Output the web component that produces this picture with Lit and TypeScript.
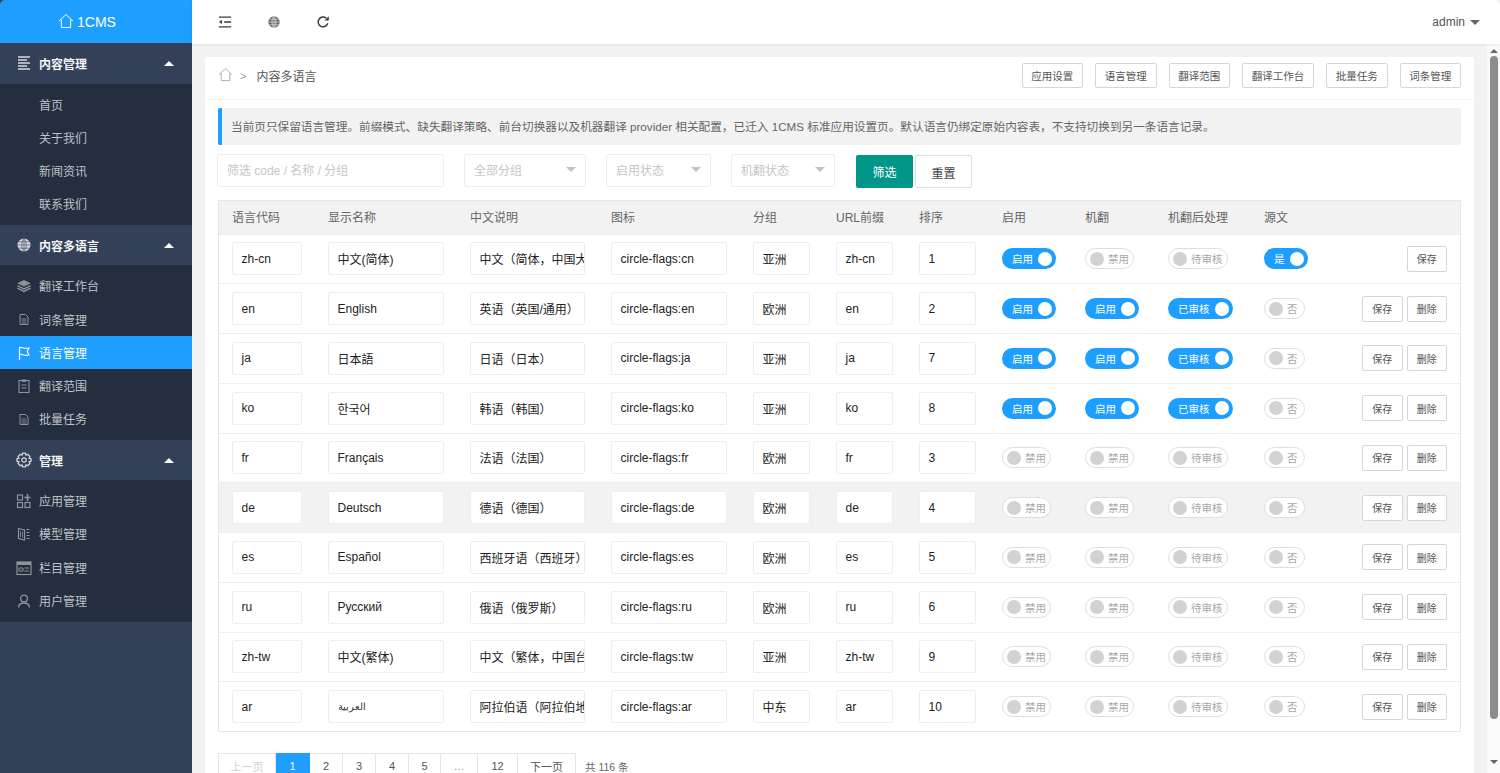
import { LitElement, html, css, svg } from "lit";
import { customElement } from "lit/decorators.js";

const ic: Record<string, any> = {
  list: svg`<path d="M2 2h12M2 5h9M2 8h12M2 11h9M2 14h12" stroke="currentColor" stroke-width="1.4" fill="none"/>`,
  globe: svg`<circle cx="8" cy="8" r="6.5" fill="currentColor"/><path class="gl" d="M1.5 8h13M2.5 4.8h11M2.5 11.2h11M8 1.5v13M8 1.5C5 4 5 12 8 14.5M8 1.5c3 2.5 3 10.5 0 13" stroke-width=".7" fill="none"/>`,
  stack: svg`<path d="M8 2l6.8 3.3L8 8.6 1.2 5.3z" fill="currentColor"/><path d="M1.4 7.6L8 10.8l6.6-3.2M1.4 10.2L8 13.4l6.6-3.2" stroke="currentColor" stroke-width="1.5" fill="none"/>`,
  doc: svg`<path d="M4 3.5h5.5L12 6v7.5H4z" stroke="currentColor" stroke-width="1" fill="none"/><path d="M5.5 8h5M5.5 10h5M5.5 12h5" stroke="currentColor" stroke-width=".9"/>`,
  flag: svg`<path d="M3.5 15V2.5C6 1.5 8 4.5 13 3L11.2 6.5 13 10C8 11.2 6 8.6 3.5 9.5" stroke="currentColor" stroke-width="1.2" fill="none"/>`,
  clip: svg`<rect x="3" y="2.5" width="10" height="12" stroke="currentColor" stroke-width="1.1" fill="none"/><rect x="5.8" y="1.5" width="4.4" height="2.4" fill="currentColor"/><path d="M5.5 7h5M5.5 10h5" stroke="currentColor"/>`,
  gear: svg`<circle cx="8" cy="8" r="2.2" stroke="currentColor" stroke-width="1.2" fill="none"/><path d="M6.5 1.2h3l.5 1.9 1.8-.7 2.1 2.1-.8 1.8 1.9.5v2.4l-1.9.6.8 1.8-2.1 2.1-1.8-.8-.5 1.9h-3l-.5-1.9-1.8.8-2.1-2.1.8-1.8-1.9-.6V6.8l1.9-.5-.8-1.8 2.1-2.1 1.8.7z" stroke="currentColor" stroke-width="1.3" fill="none"/>`,
  apps: svg`<rect x="1.5" y="2" width="5" height="5" stroke="currentColor" stroke-width="1.2" fill="none"/><rect x="1.5" y="9.5" width="5" height="5" stroke="currentColor" stroke-width="1.2" fill="none"/><rect x="9" y="9.5" width="5" height="5" stroke="currentColor" stroke-width="1.2" fill="none"/><path d="M11.5 1v7M8.5 4.5h6" stroke="currentColor" stroke-width="1.6"/>`,
  model: svg`<path d="M2.5 2.5l6 1.5v10l-6-1.5zM10.5 3.5h3M10.5 6.5h3M10.5 9.5h3M10.5 12.5h3" stroke="currentColor" stroke-width="1.2" fill="none"/><path d="M4.5 5v6M6.5 5.5v6" stroke="currentColor" stroke-width=".8"/>`,
  cal: svg`<rect x="1" y="2" width="14" height="12.5" stroke="currentColor" stroke-width="1.2" fill="none"/><path d="M1 2h14v3H1z" fill="currentColor"/><path d="M3 8h4v3H3zM8.5 8H13M8.5 11H13" stroke="currentColor" fill="none"/>`,
  user: svg`<circle cx="8" cy="5.5" r="3.4" stroke="currentColor" stroke-width="1.3" fill="none"/><path d="M2.5 14.5c.5-6 10.5-6 11 0" stroke="currentColor" stroke-width="1.3" fill="none"/>`,
  home: svg`<path d="M1 8.2L8 1.5l7 6.7M3.4 6.5V14.5h9.2V6.5" stroke="currentColor" stroke-width="1" fill="none"/>`,
  fold: svg`<path d="M1 2.5h14M7 8h8M1 13.5h14" stroke="currentColor" stroke-width="1.5" fill="none"/><path d="M1 8l3.6-2.4v4.8z" fill="currentColor"/>`,
  refresh: svg`<path d="M13.4 9.5A5.6 5.6 0 1 1 11.6 3.6" stroke="currentColor" stroke-width="1.7" fill="none"/><path d="M9.6 6.4h5V1.4z" fill="currentColor"/>`,
};
const icon = (n: string) => html`<svg class="ico" viewBox="0 0 16 16">${ic[n]}</svg>`;

const nav = [
  { t: "内容管理", i: "list", items: [["首页"], ["关于我们"], ["新闻资讯"], ["联系我们"]] },
  { t: "内容多语言", i: "globe", items: [["翻译工作台", "stack"], ["词条管理", "doc"], ["语言管理", "flag", 1], ["翻译范围", "clip"], ["批量任务", "doc"]] },
  { t: "管理", i: "gear", items: [["应用管理", "apps"], ["模型管理", "model"], ["栏目管理", "cal"], ["用户管理", "user"]] },
];

const rows = [
  ["zh-cn", "中文(简体)", "中文（简体，中国大陆）", "cn", "亚洲", "zh-cn", "1", 1, 0, 0, 1],
  ["en", "English", "英语（英国/通用）", "en", "欧洲", "en", "2", 1, 1, 1, 0],
  ["ja", "日本語", "日语（日本）", "ja", "亚洲", "ja", "7", 1, 1, 1, 0],
  ["ko", "한국어", "韩语（韩国）", "ko", "亚洲", "ko", "8", 1, 1, 1, 0],
  ["fr", "Français", "法语（法国）", "fr", "欧洲", "fr", "3", 0, 0, 0, 0],
  ["de", "Deutsch", "德语（德国）", "de", "欧洲", "de", "4", 0, 0, 0, 0],
  ["es", "Español", "西班牙语（西班牙）", "es", "欧洲", "es", "5", 0, 0, 0, 0],
  ["ru", "Русский", "俄语（俄罗斯）", "ru", "欧洲", "ru", "6", 0, 0, 0, 0],
  ["zh-tw", "中文(繁体)", "中文（繁体，中国台湾）", "tw", "亚洲", "zh-tw", "9", 0, 0, 0, 0],
  ["ar", "العربية", "阿拉伯语（阿拉伯地区）", "ar", "中东", "ar", "10", 0, 0, 0, 0],
] as any[];

const heads = ["语言代码", "显示名称", "中文说明", "图标", "分组", "URL前缀", "排序", "启用", "机翻", "机翻后处理", "源文", ""];
const tools = ["应用设置", "语言管理", "翻译范围", "翻译工作台", "批量任务", "词条管理"];
const pages: [string, string][] = [["上一页", "p-prev"], ["1", "p-on"], ["2", "p-n"], ["3", "p-n"], ["4", "p-n"], ["5", "p-n5"], ["…", "p-dots"], ["12", "p-12"], ["下一页", "p-next"]];

@customElement("app-root")
export class AppRoot extends LitElement {
  static styles = css`
    :host { display: flex; width: 1500px; height: 773px; overflow: hidden; background: #f2f2f2; color: #555;
      font-family: "Liberation Sans", "Noto Sans CJK SC", sans-serif; font-size: 12px; }
    * { box-sizing: border-box; }
    .ico { width: 16px; height: 16px; display: block; flex: none; }
    .gl { stroke: var(--gl, #fff); }
    aside { width: 192px; flex: none; background: #343f58; color: #fff; display: flex; flex-direction: column; --gl: #4a546a; }
    .logo { height: 43px; background: #1e9fff; display: flex; align-items: center; justify-content: center; gap: 3px; font-size: 14px; color: #fff; border-top-left-radius: 5px; padding-right: 18px; }
    .logo .ico { width: 16px; height: 16px; margin-bottom: 1px; }
    .gh { height: 40.5px; display: flex; align-items: center; padding: 0 16px; font-weight: 700; font-size: 12px; color: #f4f5f6; background: #343f58; }
    .gh .ico { margin-right: 7px; color: #d8dade; }
    .gh .arrow { margin-left: auto; margin-right: 2px; width: 0; height: 0; border: 5px solid transparent; border-top: 0; border-bottom: 5px solid #fff; }
    .sub { background: #252e3f; padding: 4.5px 0; }
    .it { height: 33.1px; display: flex; align-items: center; padding: 0 16px 1px 39px; color: #bfc2c7; position: relative; }
    .it .ico { position: absolute; left: 16px; top: 8.5px; color: #8e939c; }
    .it.on { background: #1e9fff; color: #fff; }
    .it.on .ico { color: #fff; }
    .main { flex: 1; min-width: 0; display: flex; flex-direction: column; }
    header { height: 44px; flex: none; background: #fff; display: flex; align-items: center; box-shadow: 0 1px 3px rgba(0,0,0,.08); position: relative; z-index: 1; padding: 0 20px 0 26px; border-top-right-radius: 6px; --gl: #eee; }
    header .ico { width: 14px; height: 14px; color: #3a3a3a; margin-right: 35px; }
    header .g .ico { color: #666; }
    .user { margin-left: auto; display: flex; align-items: center; gap: 5px; color: #555; }
    .caret { width: 0; height: 0; border: 5px solid transparent; border-bottom: 0; border-top: 5px solid #666; }
    .body { flex: 1; display: flex; min-height: 0; }
    .scroll { flex: 1; min-width: 0; padding: 13px 13px 0; overflow: hidden; }
    .bar { width: 13px; flex: none; background: #fafafa; display: flex; flex-direction: column; align-items: center; padding: 5px 0 0; }
    .bar i { width: 0; height: 0; border: 4px solid transparent; display: block; }
    .bar .up { border-top: 0; border-bottom: 4px solid #666; margin-left: 1px; }
    .bar .dn { border-bottom: 0; border-top: 4px solid #666; margin-left: 1px; margin-top: 41px; }
    .bar b { display: block; width: 8.5px; height: 663px; margin: 3px 0 0 1px; background: #8d8d8d; border-radius: 4px; }
    .card { background: #fff; border-radius: 2px; min-height: 760px; }
    .chead { height: 42.5px; display: flex; align-items: center; padding: 0 13px; border-bottom: 1px solid #f6f6f6; }
    .crumb { display: flex; align-items: center; color: #555; margin-top: -4px; }
    .crumb .ico { color: #aaa; width: 15px; height: 15px; margin-bottom: 3px; }
    .crumb span { color: #999; margin: 0 10px 0 7px; font-size: 11px; }
    .tools { margin-left: auto; display: flex; gap: 12px; margin-top: -4px; }
    .btn { background: #fff; border: 1px solid #d6d6d6; border-radius: 2px; color: #555; font-size: 10.5px; height: 25px; display: flex; align-items: center; justify-content: center; padding: 0 8.75px; white-space: nowrap; }
    .cbody { padding: 8px 13px 0; }
    .notice { height: 37px; background: #f2f2f2; border-left: 4.5px solid #1e9fff; border-radius: 2px; display: flex; align-items: center; padding: 0 0 2px 9px; color: #666; font-size: 11.65px; }
    .filters { display: flex; align-items: flex-start; margin: 9px 0 12px -1px; }
    .fi { height: 33px; border: 1px solid #eee; border-radius: 2px; background: #fff; color: #c6c6c6; display: flex; align-items: center; padding: 0 9px 2px; font-size: 12px; white-space: nowrap; }
    .fi.w1 { width: 227px; margin-right: 20px; }
    .fi.w2 { width: 122px; margin-right: 20px; }
    .fi.w3 { width: 105px; margin-right: 20px; }
    .fi.w4 { width: 104px; margin-right: 21px; }
    .fi .caret { margin-left: auto; border-top-color: #c2c2c2; }
    .go { width: 57px; height: 33px; margin: 1px 2px 0 0; background: #009688; color: #fff; border-radius: 2px; display: flex; align-items: center; justify-content: center; }
    .re { width: 57px; height: 33px; margin-top: 1px; border: 1px solid #ddd; border-radius: 2px; color: #444; display: flex; align-items: center; justify-content: center; padding-top: 2px; }
    .table { border: 1px solid #e6e6e6; }
    .row { display: grid; grid-template-columns: 96px 142px 141px 142px 83px 83px 83px 83px 83px 96px 60px 1fr; padding: 0 13px; align-items: center; height: 49.75px; border-top: 1px solid #eee; }
    .row.hd { height: 33px; border-top: 0; background: #f2f2f2; color: #666; padding-bottom: 1px; }
    .row.hov { background: #f2f2f2; }
    .inp { height: 33px; border: 1px solid #eee; border-radius: 2px; background: #fff; color: #222; display: flex; align-items: center; padding-left: 8.5px; white-space: nowrap; overflow: hidden; }
    .c0 { width: 70px; } .c1 { width: 116px; } .c2 { width: 115px; } .c3 { width: 116px; } .c4 { width: 57px; }
    .ar { font-size: 9.5px; color: #333; }
    .sw { height: 21px; border-radius: 11px; display: inline-flex; align-items: center; font-size: 10.5px; justify-self: start; white-space: nowrap; }
    .sw.on { background: #1e9fff; color: #fff; padding: 0 4px 0 10px; gap: 5px; }
    .sw.off { border: 1px solid #dedede; background: #fff; color: #a8a8a8; padding: 0 4px; gap: 4px; min-width: 41px; }
    .sw u { width: 14px; height: 14px; border-radius: 50%; display: block; flex: none; }
    .sw.on u { background: #fff; }
    .sw.off u { background: #d2d2d2; }
    .acts { display: flex; justify-content: flex-end; gap: 4px; }
    .mini { width: 40.5px; height: 26px; border: 1px solid #d6d6d6; border-radius: 2px; background: #fff; color: #555; font-size: 10px; display: flex; align-items: center; justify-content: center; }
    .pager { display: flex; margin-top: 21px; height: 26px; align-items: stretch; font-size: 11px; }
    .pg { border: 1px solid #e6e6e6; border-left: 0; display: flex; align-items: center; justify-content: center; color: #555; background: #fff; }
    .p-prev { width: 58px; border-left: 1px solid #e6e6e6; color: #d2d2d2; }
    .p-on { width: 34px; background: #1e9fff; border-color: #1e9fff; color: #fff; }
    .p-n { width: 33px; } .p-n5 { width: 32px; } .p-dots { width: 37px; color: #999; } .p-12 { width: 40px; } .p-next { width: 58px; }
    .total { margin-left: 9px; color: #666; display: flex; align-items: center; font-size: 10.5px; }
  `;

  private sw(on: any, onT: string, offT: string) {
    return on
      ? html`<span class="sw on">${onT}<u></u></span>`
      : html`<span class="sw off"><u></u>${offT}</span>`;
  }

  render() {
    return html`
      <aside>
        <div class="logo">${icon("home")}1CMS</div>
        ${nav.map((g) => html`
          <div class="gh">${icon(g.i)}<span>${g.t}</span><i class="arrow"></i></div>
          <div class="sub">
            ${g.items.map((it: any[]) => html`<div class="it ${it[2] ? "on" : ""}">${it[1] ? icon(it[1]) : ""}${it[0]}</div>`)}
          </div>`)}
      </aside>
      <div class="main">
        <header>
          ${icon("fold")}<span class="g">${icon("globe")}</span>${icon("refresh")}
          <div class="user">admin<i class="caret"></i></div>
        </header>
        <div class="body">
          <div class="scroll">
            <div class="card">
              <div class="chead">
                <div class="crumb">${icon("home")}<span>&gt;</span>内容多语言</div>
                <div class="tools">${tools.map((t) => html`<div class="btn">${t}</div>`)}</div>
              </div>
              <div class="cbody">
                <div class="notice">当前页只保留语言管理。前缀模式、缺失翻译策略、前台切换器以及机器翻译 provider 相关配置，已迁入 1CMS 标准应用设置页。默认语言仍绑定原始内容表，不支持切换到另一条语言记录。</div>
                <div class="filters">
                  <div class="fi w1">筛选 code / 名称 / 分组</div>
                  <div class="fi w2">全部分组<i class="caret"></i></div>
                  <div class="fi w3">启用状态<i class="caret"></i></div>
                  <div class="fi w4">机翻状态<i class="caret"></i></div>
                  <div class="go">筛选</div>
                  <div class="re">重置</div>
                </div>
                <div class="table">
                  <div class="row hd">${heads.map((h) => html`<div>${h}</div>`)}</div>
                  ${rows.map((r, i) => html`
                    <div class="row ${i === 5 ? "hov" : ""}">
                      <div class="inp c0">${r[0]}</div>
                      <div class="inp c1"><span class=${r[0] === "ar" ? "ar" : ""}>${r[1]}</span></div>
                      <div class="inp c2">${r[2]}</div>
                      <div class="inp c3">circle-flags:${r[3]}</div>
                      <div class="inp c4">${r[4]}</div>
                      <div class="inp c4">${r[5]}</div>
                      <div class="inp c4">${r[6]}</div>
                      ${this.sw(r[7], "启用", "禁用")}
                      ${this.sw(r[8], "启用", "禁用")}
                      ${this.sw(r[9], "已审核", "待审核")}
                      ${this.sw(r[10], "是", "否")}
                      <div class="acts"><div class="mini">保存</div>${i === 0 ? "" : html`<div class="mini">删除</div>`}</div>
                    </div>`)}
                </div>
                <div class="pager">
                  ${pages.map(([p, c]) => html`<div class="pg ${c}">${p}</div>`)}
                  <div class="total">共 116 条</div>
                </div>
              </div>
            </div>
          </div>
          <div class="bar"><i class="up"></i><b></b><i class="dn"></i></div>
        </div>
      </div>
    `;
  }
}
